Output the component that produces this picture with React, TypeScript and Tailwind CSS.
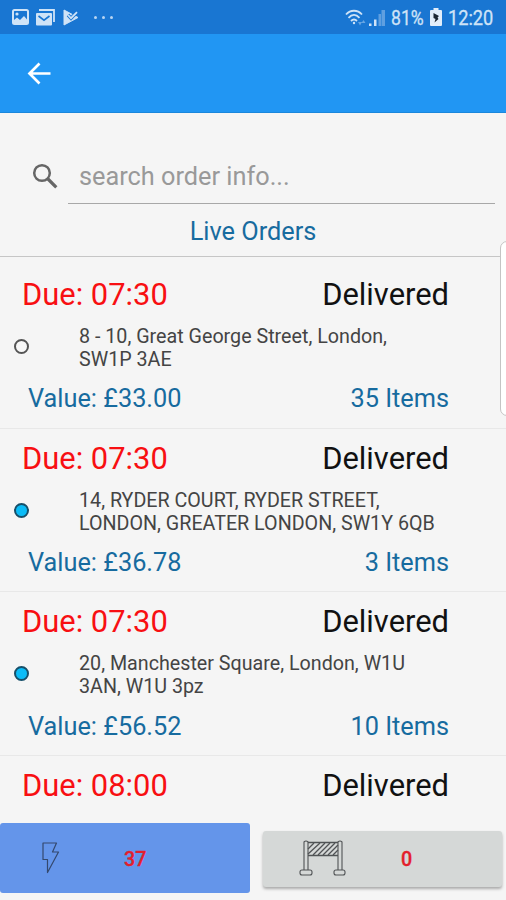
interface Order {
  id: number;
  due: string;
  status: string;
  address?: string[];
  value?: string;
  items?: string;
  active?: boolean;
}

const orders: Order[] = [
  {
    id: 1,
    due: '07:30',
    status: 'Delivered',
    address: ['8 - 10, Great George Street, London,', 'SW1P 3AE'],
    value: '£33.00',
    items: '35 Items',
    active: false,
  },
  {
    id: 2,
    due: '07:30',
    status: 'Delivered',
    address: ['14, RYDER COURT, RYDER STREET,', 'LONDON, GREATER LONDON, SW1Y 6QB'],
    value: '£36.78',
    items: '3 Items',
    active: true,
  },
  {
    id: 3,
    due: '07:30',
    status: 'Delivered',
    address: ['20, Manchester Square, London, W1U', '3AN, W1U 3pz'],
    value: '£56.52',
    items: '10 Items',
    active: true,
  },
  { id: 4, due: '08:00', status: 'Delivered' },
];

function StatusBar() {
  return (
    <div className="flex h-[34px] shrink-0 items-center bg-[#1976d2] pl-3 pr-[13px] text-[#cfe3f7]">
      <svg className="h-4 w-[17px]" viewBox="0 0 17 16">
        <rect x="1" y="1" width="15" height="14" rx="1.5" fill="none" stroke="currentColor" strokeWidth="2" />
        <path d="M2 14V11L5 8.5L8 11L12 7L15 10.5V14Z" fill="currentColor" />
        <circle cx="5" cy="5" r="1.6" fill="currentColor" />
      </svg>
      <svg className="ml-[6px] h-[17px] w-5" viewBox="0 0 20 17">
        <path d="M4 1H19V13" fill="none" stroke="currentColor" strokeWidth="1.8" />
        <rect x="1" y="4" width="16" height="12.5" rx="1" fill="currentColor" />
        <path d="M3.5 7L9 11.2L14.5 7" fill="none" stroke="#1976d2" strokeWidth="1.6" />
      </svg>
      <svg className="ml-[8px] h-[17px] w-4" viewBox="0 0 16 17">
        <path d="M1 1L15 8.5L1 16Z" fill="currentColor" stroke="currentColor" strokeLinejoin="round" />
        <path d="M5 6L8 9.2L15 2" fill="none" stroke="#1976d2" strokeWidth="3.4" />
        <path d="M5 6L8 9.2L14 3.2" fill="none" stroke="currentColor" strokeWidth="1.8" />
      </svg>
      <div className="ml-[15px] flex gap-[5px]">
        <span className="size-[3px] rounded-full bg-[#b8d5f2]" />
        <span className="size-[3px] rounded-full bg-[#b8d5f2]" />
        <span className="size-[3px] rounded-full bg-[#b8d5f2]" />
      </div>
      <svg className="ml-auto h-[17px] w-[21px]" viewBox="0 0 21 17" fill="none" stroke="currentColor" strokeWidth="1.8">
        <path d="M1 5.5C5.5 .5 12.5 .5 17 5.5" />
        <path d="M3.5 8.8C7 5 11 5 14.5 8.8" />
        <path d="M6 12C8 10 10 10 12 12" />
        <circle cx="9" cy="14" r="1.2" fill="currentColor" stroke="none" />
        <path d="M13 13L15 16.5L17 13ZM16.5 14L18.5 11L20.5 14Z" fill="#68a6e3" stroke="none" />
      </svg>
      <svg className="ml-[2px] mr-px h-[17px] w-[18px]" viewBox="0 0 18 17">
        <path d="M1 14.5H3.5V17H1ZM6 10.5H8.5V17H6Z" fill="currentColor" />
        <path d="M10.5 5H13V17H10.5ZM13.5 1H17V17H13.5Z" fill="#5f9fe0" />
      </svg>
      <span className="ml-[4px] w-[35px] origin-left scale-x-[.88] whitespace-nowrap pt-px text-[20px] leading-none [-webkit-text-stroke:.3px]">
        81%
      </span>
      <svg className="ml-[4px] h-[18px] w-3" viewBox="0 0 12 18">
        <path d="M3.5 0H8.5V2H11Q12 2 12 3V17Q12 18 11 18H1Q0 18 0 17V3Q0 2 1 2H3.5Z" fill="#e2eefa" />
        <path d="M3.5 5L9 8L7.5 9.5L8.5 11L4.5 14.5L5.5 11L3.5 10Z" fill="#1b2733" />
      </svg>
      <span className="ml-[6px] w-[45px] origin-left scale-x-[.91] whitespace-nowrap pt-px text-[20px] leading-none [-webkit-text-stroke:.3px]">
        12:20
      </span>
    </div>
  );
}

function AppBar() {
  return (
    <header className="flex h-[79px] shrink-0 items-center border-b border-[#1b87dc] bg-[#2196f3] pl-[27px]">
      <svg className="h-[23px] w-6" viewBox="0 0 24 23" fill="none" stroke="white" strokeWidth="2.7">
        <path d="M12.5 1.5L2.5 11.5L12.5 21.5M2.5 11.5H23.5" />
      </svg>
    </header>
  );
}

function SearchField() {
  return (
    <div className="flex h-[91px] shrink-0 pl-8 pr-[11px]">
      <svg className="mt-[50px] size-[26px]" viewBox="0 0 26 26" fill="none" stroke="#666" strokeWidth="2.5">
        <circle cx="10" cy="10" r="7.8" />
        <path d="M15.5 15.5L24.3 24.3" strokeWidth="3.2" />
      </svg>
      <div className="ml-[10px] flex-1 border-b border-[#a8a8a8] pl-[11px] pt-[49px] text-[25.3px] leading-[30px] text-[#999]">
        search order info...
      </div>
    </div>
  );
}

function OrderRow({ order }: { order: Order }) {
  return (
    <li className="h-[163.6px] shrink-0 border-b border-[#e8e8e8] pt-3">
      <div className="flex justify-between pl-[22px] pr-[57px] text-[30.9px] leading-[36px]">
        <span className="text-[#f80f12]">Due: {order.due}</span>
        <span className="text-[#111]">{order.status}</span>
      </div>
      {order.address && (
        <div className="mt-3 flex h-[46px] items-start pl-[14px]">
          <span
            className={
              order.active
                ? 'mt-[14px] size-[15px] rounded-full border-2 border-[#17506a] bg-[#0bbcf7]'
                : 'mt-[14px] size-[15px] rounded-full border-2 border-[#555] bg-[#f8f8f8]'
            }
          />
          <p className="ml-[50px] text-[19.7px] leading-[23px] text-[#444]">
            {order.address.map((line) => (
              <span key={line} className="block whitespace-nowrap">
                {line}
              </span>
            ))}
          </p>
        </div>
      )}
      {order.value && (
        <div className="mt-[13.4px] flex justify-between pl-7 pr-[57px] text-[25.3px] leading-[30px] text-[#176b9f]">
          <span>Value: {order.value}</span>
          <span>{order.items}</span>
        </div>
      )}
    </li>
  );
}

function BottomTabs() {
  return (
    <footer className="flex h-[86px] shrink-0 items-start bg-[#f5f5f5] pt-[9px]">
      <button className="flex h-[70px] w-[250px] items-center rounded-[3px] bg-[#6495ea]">
        <svg className="ml-[41px] h-8 w-[19px]" viewBox="0 0 19 32" fill="none" stroke="#34496e" strokeWidth="1.2">
          <path d="M2 1H15.5L11.5 10H17.5L6.5 30.5V17.5H2Z" strokeLinejoin="round" />
        </svg>
        <span className="ml-[64px] pt-[3px] text-[19.7px] font-medium text-[#e3202c] [-webkit-text-stroke:.3px]">37</span>
      </button>
      <button className="ml-[13px] mt-2 flex h-[56px] w-[239px] items-center rounded-[3px] bg-[#d5d8d7] shadow-[0_2px_3px_#aaa]">
        <svg className="-mt-[2px] ml-[36px] h-9 w-[47px]" viewBox="0 0 47 36" fill="none" stroke="#505355" strokeWidth="1.1">
          <path d="M5 30V2Q7 0 9 2V30M39 30V2Q41 0 43 2V30" />
          <rect x="1" y="30" width="12" height="5" rx="2" />
          <rect x="35" y="30" width="11" height="5" rx="2" />
          <path d="M9 2.5H39M9 15.5H39" strokeWidth="1.5" />
          <path d="M9 9L15 3M9 14L21 3M14 15L26 3M19 15L31 3M24 15L36 3M29 15L39 5M34 15L39 10" strokeWidth="1.3" />
        </svg>
        <span className="ml-[55px] pt-[2px] text-[19.7px] font-medium text-[#e3202c] [-webkit-text-stroke:.3px]">0</span>
      </button>
    </footer>
  );
}

export default function App() {
  return (
    <div className="relative flex h-[900px] w-[506px] flex-col overflow-hidden bg-[#f5f5f5] font-['Roboto',sans-serif]">
      <StatusBar />
      <AppBar />
      <SearchField />
      <h1 className="h-[53px] shrink-0 border-b border-[#c6c6c6] pt-[13px] text-center text-[25.3px] leading-[30px] text-[#176b9f]">
        Live Orders
      </h1>
      <ul className="flex min-h-0 flex-1 flex-col overflow-hidden pt-2">
        {orders.map((order) => (
          <OrderRow key={order.id} order={order} />
        ))}
      </ul>
      <BottomTabs />
      {/* edge panel handle */}
      <div className="absolute -right-2 top-[241px] h-[175px] w-[14px] rounded-[7px] border border-[#c4c4c4] bg-white" />
    </div>
  );
}
